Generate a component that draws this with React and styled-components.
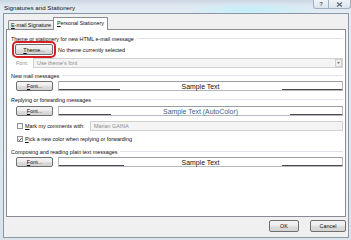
import React from 'react';
import styled, { createGlobalStyle } from 'styled-components';

const Global = createGlobalStyle`
  html, body { margin: 0; padding: 0; background: #fff; }
  body { font-family: "Liberation Sans", Arial, sans-serif; }
  * { box-sizing: border-box; }
`;

const Window = styled.div`
  width: 351px;
  height: 240px;
  display: flex;
  flex-direction: column;
  overflow: hidden;
  background:
    radial-gradient(ellipse 70px 8px at 250px 10px, rgba(190, 240, 250, 0.9), rgba(190, 240, 250, 0) 100%),
    linear-gradient(to bottom, #cbd6e2 0px, #dfe8f1 6px, #e4ecf4 13px, #dae3ec 100%);
  font-size: 5.4px;
  color: #0e0e0e;
`;

const TitleBar = styled.div`
  height: 13px;
  flex: none;
  display: flex;
  align-items: flex-start;
`;

const Title = styled.div`
  font-size: 6.2px;
  color: #111;
  padding: 4px 0 0 4px;
`;

const Captions = styled.div`
  margin-left: auto;
  display: flex;
`;

const CapButton = styled.div`
  width: ${p => p.$w}px;
  height: 9px;
  border: 1px solid #a3b0be;
  border-top: none;
  border-left: ${p => (p.$first ? '1px solid #a3b0be' : 'none')};
  border-radius: 0 0 ${p => (p.$last ? '3px' : '0')} ${p => (p.$first ? '3px' : '0')};
  background: linear-gradient(to bottom, #eef3f8, #dbe4ee);
  display: flex;
  align-items: center;
  justify-content: center;
  font-size: 6px;
  font-weight: bold;
  color: #5a6470;
`;

const Frame = styled.div`
  flex: 1;
  margin: 0 2px 2px 3px;
  border: 1px solid #8896a6;
  background: #f0f0f0;
  display: flex;
  flex-direction: column;
  padding: 3px 2px 0 2px;
  min-height: 0;
`;

const TabStrip = styled.div`
  height: 13px;
  flex: none;
  display: flex;
  align-items: flex-end;
  padding-left: 2px;
  margin-bottom: -1px;
  position: relative;
  z-index: 1;
`;

const Tab = styled.div`
  width: ${p => p.$w}px;
  height: ${p => (p.$active ? 13 : 10)}px;
  border: 1px solid #898c95;
  border-bottom: ${p => (p.$active ? 'none' : '1px solid #898c95')};
  margin-left: ${p => (p.$active ? '-1px' : '0')};
  background: ${p => (p.$active ? '#fff' : 'linear-gradient(to bottom, #f3f3f3, #e3e3e3)')};
  display: flex;
  align-items: ${p => (p.$active ? 'flex-start' : 'center')};
  padding-top: ${p => (p.$active ? '2px' : '0')};
  justify-content: center;
  border-radius: 1px 1px 0 0;
  white-space: nowrap;
`;

const U = styled.span`
  text-decoration: underline;
`;

const Panel = styled.div`
  height: 188px;
  flex: none;
  border: 1px solid #898c95;
  background: #fff;
  display: flex;
  flex-direction: column;
  padding: 4px 2px 0 4px;
`;

const GroupHeader = styled.div`
  height: 9px;
  margin-top: ${p => p.$mt || 0}px;
  display: flex;
  align-items: center;
  white-space: nowrap;
`;

const Rule = styled.div`
  flex: 1;
  height: 1px;
  margin-left: 3px;
  background: #dde3e9;
`;

const Row = styled.div`
  height: ${p => p.$h || 10}px;
  margin-top: ${p => p.$mt || 0}px;
  padding-left: ${p => p.$indent || 5}px;
  display: flex;
  align-items: center;
  white-space: nowrap;
`;

const Button = styled.div`
  width: ${p => p.$w}px;
  height: ${p => p.$h || 10}px;
  flex: none;
  border: 1px solid #707070;
  border-radius: 2px;
  background: linear-gradient(to bottom, #f4f4f4 0%, #ececec 48%, #dedede 52%, #d2d2d2 100%);
  display: flex;
  align-items: center;
  justify-content: center;
  ${p => (p.$highlight ? 'outline: 2px solid #d41e23; outline-offset: 1px;' : '')}
`;

const Note = styled.span`
  margin-left: 5px;
`;

const DisabledLabel = styled.span`
  width: 17px;
  flex: none;
  color: #8d8d8d;
`;

const Select = styled.div`
  flex: 1;
  height: 10px;
  border: 1px solid #d2d2d2;
  background: #f4f4f4;
  display: flex;
  align-items: center;
  color: #8d8d8d;
  padding-left: 3px;
`;

const SelectArrow = styled.div`
  margin-left: auto;
  width: 7px;
  height: 8px;
  border: 1px solid #cfcfcf;
  background: #f0f0f0;
  display: flex;
  align-items: center;
  justify-content: center;
`;

const Sample = styled.div`
  flex: 1;
  margin-left: 5px;
  height: 10px;
  border: 1px solid #b5b8bf;
  border-top-color: #9a9da5;
  background: #fff;
  display: grid;
  grid-template-columns: 1fr auto 1fr;
  align-items: center;
`;

const SampleLine = styled.div`
  width: ${p => p.$w}px;
  height: 1px;
  background: #4a4a4a;
  align-self: end;
  justify-self: ${p => (p.$right ? 'end' : 'start')};
`;

const SampleText = styled.span`
  color: ${p => p.$color || '#111'};
  font-size: 6.9px;
`;

const Check = styled.div`
  width: 6px;
  height: 6px;
  flex: none;
  border: 1px solid #8e8f8f;
  background: linear-gradient(to bottom, #f4f4f4, #fff);
  display: flex;
  align-items: center;
  justify-content: center;
  margin-right: 2px;
`;

const CheckLabel = styled.span`
  width: ${p => (p.$w ? `${p.$w}px` : 'auto')};
  flex: none;
`;

const Field = styled.div`
  flex: 1;
  height: 10px;
  border: 1px solid #d0d0d0;
  background: #f4f4f4;
  color: #8d8d8d;
  display: flex;
  align-items: center;
  padding-left: 3px;
`;

const Footer = styled.div`
  flex: none;
  height: 20px;
  display: flex;
  justify-content: flex-end;
  align-items: flex-start;
  padding: 3px 0 0 0;
  gap: 11px;
`;

function SampleBox({ left, right, text, color }) {
  return (
    <Sample>
      <SampleLine $w={left} />
      <SampleText $color={color}>{text}</SampleText>
      <SampleLine $w={right} $right />
    </Sample>
  );
}

function FontRow({ mt, left, right, text, color }) {
  return (
    <Row $mt={mt}>
      <Button $w={37}><U>F</U>ont...</Button>
      <SampleBox left={left} right={right} text={text} color={color} />
    </Row>
  );
}

function Header({ children, mt }) {
  return (
    <GroupHeader $mt={mt}>
      {children}
      <Rule />
    </GroupHeader>
  );
}

export default function App() {
  return (
    <>
      <Global />
      <Window>
        <TitleBar>
          <Title>Signatures and Stationery</Title>
          <Captions>
            <CapButton $w={16} $first>?</CapButton>
            <CapButton $w={22} $last>
              <svg width="7" height="5" viewBox="0 0 7 5">
                <path d="M1 0.5 L6 4.5 M6 0.5 L1 4.5" stroke="#5a6470" strokeWidth="1.2" />
              </svg>
            </CapButton>
          </Captions>
        </TitleBar>
        <Frame>
          <TabStrip>
            <Tab $w={46}><U>E</U>-mail Signature</Tab>
            <Tab $w={55} $active><U>P</U>ersonal Stationery</Tab>
          </TabStrip>
          <Panel>
            <Header>Theme or stationery for new HTML e-mail message</Header>
            <Row $mt={1} $h={11} $indent={4}>
              <Button $w={38} $h={11} $highlight><U>T</U>heme...</Button>
              <Note>No theme currently selected</Note>
            </Row>
            <Row $mt={3} $indent={5}>
              <DisabledLabel>Font:</DisabledLabel>
              <Select>
                Use theme's font
                <SelectArrow>
                  <svg width="3" height="2" viewBox="0 0 3 2">
                    <path d="M0 0 L3 0 L1.5 2 Z" fill="#777" />
                  </svg>
                </SelectArrow>
              </Select>
            </Row>
            <Header mt={3}>New mail messages</Header>
            <FontRow mt={1} left={61} right={60} text="Sample Text" />
            <Header mt={4}>Replying or forwarding messages</Header>
            <FontRow mt={2} left={52} right={52} text="Sample Text (AutoColor)" color="#3c5f8c" />
            <Row $mt={5} $indent={6}>
              <Check />
              <CheckLabel $w={65}><U>M</U>ark my comments with:</CheckLabel>
              <Field>Marian GAINA</Field>
            </Row>
            <Row $mt={3} $indent={6}>
              <Check>
                <svg width="5" height="5" viewBox="0 0 5 5">
                  <path d="M0.6 2.6 L1.9 4 L4.4 0.8" stroke="#222" strokeWidth="1" fill="none" />
                </svg>
              </Check>
              <CheckLabel><U>P</U>ick a new color when replying or forwarding</CheckLabel>
            </Row>
            <Header mt={3}>Composing and reading plain text messages</Header>
            <FontRow mt={1} left={65} right={60} text="Sample Text" />
          </Panel>
          <Footer>
            <Button $w={30} $h={12}>OK</Button>
            <Button $w={36} $h={12}>Cancel</Button>
          </Footer>
        </Frame>
      </Window>
    </>
  );
}
